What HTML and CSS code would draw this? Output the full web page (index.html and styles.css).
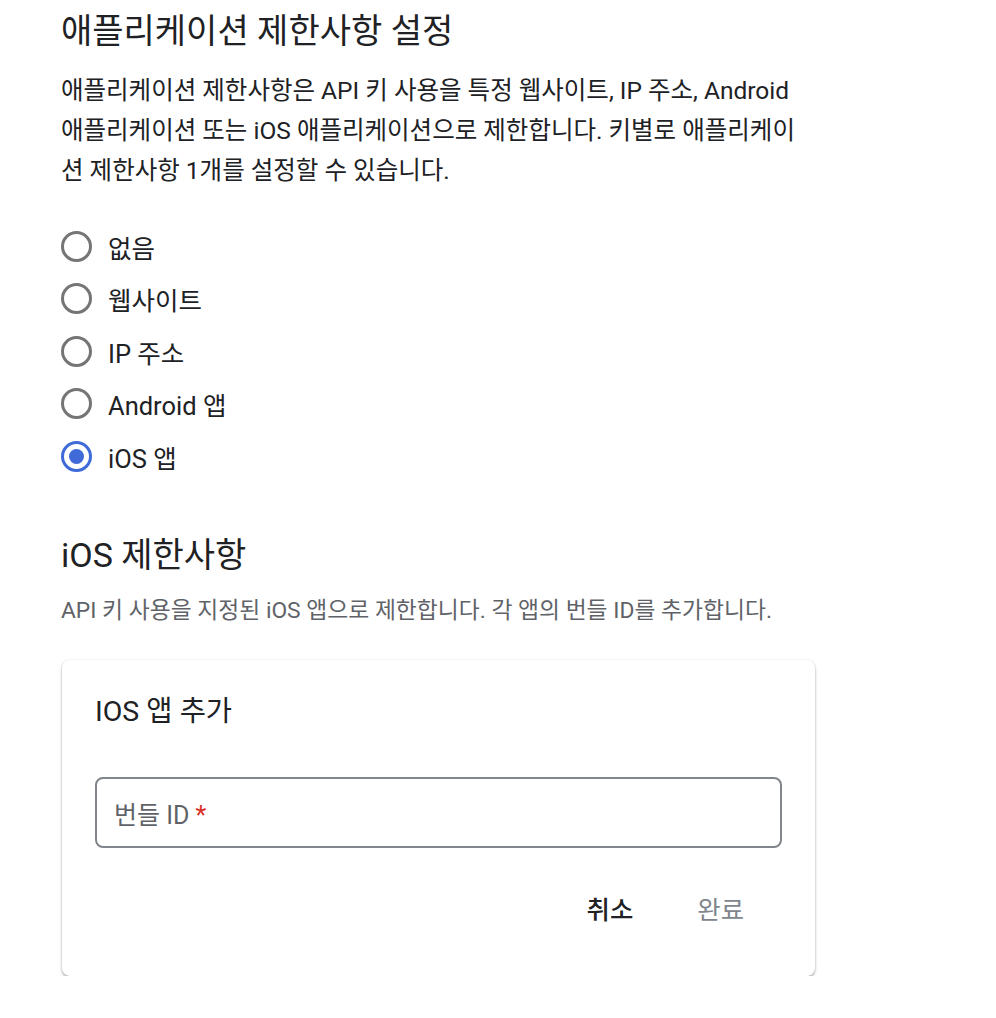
FILE: index.html
```html
<!DOCTYPE html>
<html lang="ko">
<head>
<meta charset="utf-8">
<link rel="stylesheet" href="styles.css">
</head>
<body>
<main class="page">
  <h1 class="title">애플리케이션 제한사항 설정</h1>
  <p class="intro">애플리케이션 제한사항은 API 키 사용을 특정 웹사이트, IP 주소, Android 애플리케이션 또는 iOS 애플리케이션으로 제한합니다. 키별로 애플리케이션 제한사항 1개를 설정할 수 있습니다.</p>
  <ul class="radios">
    <li class="radio"><span class="circle"></span><span class="label">없음</span></li>
    <li class="radio"><span class="circle"></span><span class="label">웹사이트</span></li>
    <li class="radio"><span class="circle"></span><span class="label">IP 주소</span></li>
    <li class="radio"><span class="circle"></span><span class="label">Android 앱</span></li>
    <li class="radio checked"><span class="circle"></span><span class="label">iOS 앱</span></li>
  </ul>
  <h2 class="subtitle">iOS 제한사항</h2>
  <p class="desc">API 키 사용을 지정된 iOS 앱으로 제한합니다. 각 앱의 번들 ID를 추가합니다.</p>
  <section class="card">
    <h3 class="card-title">IOS 앱 추가</h3>
    <div class="field"><span class="placeholder">번들 ID <span class="req">*</span></span></div>
    <div class="actions">
      <button class="btn cancel">취소</button>
      <button class="btn done">완료</button>
    </div>
  </section>
</main>
</body>
</html>
```
FILE: styles.css
```css
* { box-sizing: border-box; }
html, body { margin: 0; padding: 0; background: #fff; }
body {
  font-family: Roboto, "Noto Sans CJK KR", sans-serif;
  color: #202124;
}
.page { padding: 8px 0 0 61px; width: 830px; }
.title {
  margin: 0;
  font-size: 34px;
  font-weight: 400;
  line-height: 46px;
  color: #202124;
}
.intro {
  margin: 17px 0 0;
  font-size: 24.5px;
  line-height: 40px;
  width: 753px;
  color: #202124;
}
.radios { list-style: none; margin: 40px 0 0; padding: 0; display: flex; flex-direction: column; gap: 22.5px; }
.radio { display: flex; align-items: center; gap: 16px; height: 30px; font-size: 25.5px; }
.circle {
  width: 31px; height: 31px; border-radius: 50%;
  border: 3.5px solid #757575;
  display: flex; align-items: center; justify-content: center;
  flex: none;
}
.checked .circle { border-color: #3f6ad8; }
.checked .circle::after {
  content: ""; width: 15px; height: 15px; border-radius: 50%; background: #3f6ad8;
}
.subtitle {
  margin: 61px 0 0;
  font-size: 34px; font-weight: 400; line-height: 46px;
}
.desc {
  margin: 18px 0 0;
  font-size: 22.8px; line-height: 30px; color: #5f6368;
}
.card {
  margin: 34px 0 0 1px;
  width: 753px; height: 316px;
  border-radius: 8px;
  background: #fff;
  box-shadow: 0 2px 3px rgba(0,0,0,0.3), 0 0 2px rgba(60,64,67,0.12);
  padding: 34px 33px 0;
}
.card-title { margin: 0; font-size: 28.5px; font-weight: 400; line-height: 36px; }
.field {
  margin-top: 47px;
  height: 71px;
  border: 2px solid #80868b;
  border-radius: 8px;
  display: flex; align-items: center; padding: 0 17px;
}
.placeholder { font-size: 25px; color: #5f6368; }
.req { color: #d93025; }
.actions { display: flex; justify-content: flex-end; margin-top: 44px; }
.btn {
  font-family: inherit; background: none; border: 0;
  font-size: 25.4px; line-height: 36px; cursor: pointer;
}
.cancel { color: #202124; font-weight: 500; padding: 0 32px; }
.done { color: #80868b; padding: 0 38px 0 32px; }
```
